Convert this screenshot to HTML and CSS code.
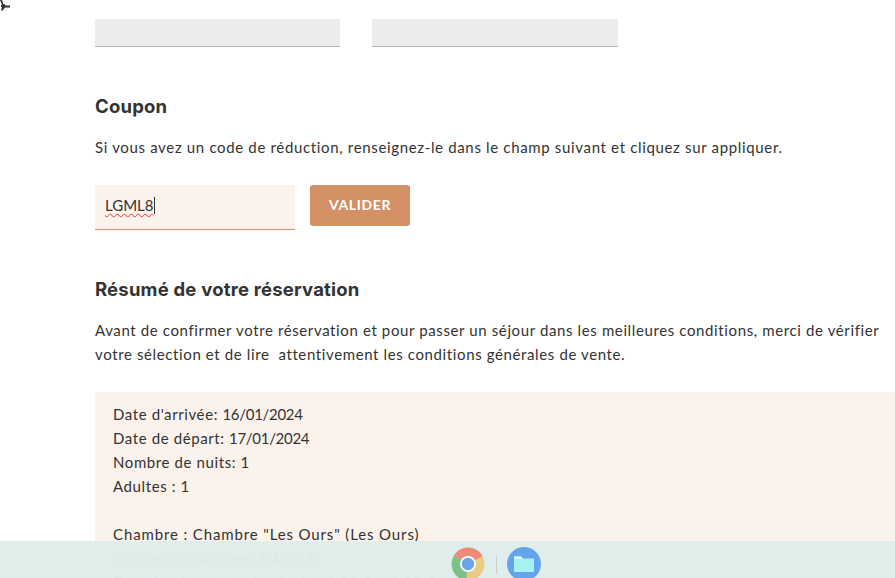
FILE: index.html
```html
<!DOCTYPE html>
<html lang="fr">
<head>
<meta charset="utf-8">
<title>Réservation</title>
<link rel="stylesheet" href="styles.css">
</head>
<body>
<svg class="cursor" width="12" height="12" viewBox="0 0 12 12"><path d="M0 0h2l1 3v1h1.500l1 1.500h4.500v2h-4.500l-1.500 1-1 2h-2l1-3.500h-1v-2h1z" fill="#333"/></svg>
<main class="page">
  <div class="fields">
    <div class="field"></div>
    <div class="field"></div>
  </div>
  <h2 class="coupon-title">Coupon</h2>
  <p class="text coupon-text">Si vous avez un code de réduction, renseignez-le dans le champ suivant et cliquez sur appliquer.</p>
  <div class="coupon-row">
    <div class="coupon-input"><span class="typed">LGML8</span></div>
    <button class="validate">VALIDER</button>
  </div>
  <h2 class="summary-title">Résumé de votre réservation</h2>
  <p class="text summary-text">Avant de confirmer votre réservation et pour passer un séjour dans les meilleures conditions, merci de vérifier votre sélection et de lire&nbsp; attentivement les conditions générales de vente.</p>
  <div class="summary">
    <div>Date d'arrivée: <span class="num">16/01/2024</span></div>
    <div>Date de départ: <span class="num">17/01/2024</span></div>
    <div>Nombre de nuits: 1</div>
    <div>Adultes : 1</div>
    <div class="gap">&nbsp;</div>
    <div class="room">Chambre : Chambre "Les Ours" (Les Ours)</div>
    <div>Prix de la chambres: 84,00 €</div>
    <div>Taxe de séjour (1 x 1 x 1,40) : 2,00 € + 0,00 €</div>
  </div>
</main>
<footer class="shelf">
  <svg class="app" width="34" height="34" viewBox="0 0 34 34">
    <circle cx="17" cy="17" r="16.500" fill="#e9cb84"/>
    <path d="M17 17L3 8.500A16.500 16.500 0 0 1 31.500 9z" fill="#ee8b78"/>
    <path d="M17 17L3 8.500A16.500 16.500 0 0 0 15 33.400z" fill="#7cc08c"/>
    <circle cx="17" cy="17" r="8" fill="#fff"/>
    <circle cx="17" cy="17" r="6.200" fill="#6ca4ec"/>
  </svg>
  <span class="divider"></span>
  <svg class="app" width="34" height="34" viewBox="0 0 34 34">
    <circle cx="17" cy="17" r="17" fill="#64a4ec"/>
    <path d="M7 9.500h7l2 2h11v13.500H7z" fill="#a6f2f2"/>
    <path d="M7 9.500h7l2 2h-9z" fill="#e8fafa"/>
  </svg>
</footer>
</body>
</html>
```
FILE: styles.css
```css
html, body {
  margin: 0;
  height: 578px;
  overflow: hidden;
  background: #fff;
}
body {
  font-family: "Lato", "Liberation Sans", sans-serif;
  color: #333;
}
.cursor {
  position: absolute;
  left: 0;
  top: 0;
}
.page {
  padding: 19px 0 0 95px;
}
.fields {
  display: flex;
  gap: 32px;
}
.field {
  width: 245px;
  height: 27px;
  background: #ececec;
  border-bottom: 1px solid #b5b5b5;
}
.field + .field {
  width: 246px;
}
h2 {
  margin: 0;
  font-family: "Inter", sans-serif;
  font-weight: 700;
  font-size: 18.500px;
  line-height: 24px;
  letter-spacing: 0.200px;
  color: #333;
}
.coupon-title {
  margin-top: 47px;
}
.text {
  margin: 0;
  font-size: 15px;
  line-height: 24px;
  letter-spacing: 0.660px;
  color: #333;
}
.coupon-text {
  margin-top: 17px;
}
.coupon-row {
  display: flex;
  gap: 15px;
  margin-top: 26px;
}
.coupon-input {
  box-sizing: border-box;
  width: 200px;
  height: 45px;
  padding: 0 0 3px 10px;
  background: #fcf2ec;
  border-bottom: 1px solid #d39065;
  display: flex;
  align-items: center;
  font-size: 15px;
}
.typed {
  text-decoration: underline wavy #e8342a 1px;
  text-underline-offset: 2px;
  border-right: 1px solid #333;
  line-height: 17px;
}
.validate {
  width: 100px;
  height: 41px;
  padding: 0 0 3px;
  border: 0;
  border-radius: 3px;
  background: #d39065;
  color: #fff;
  font-family: "Lato", sans-serif;
  font-weight: 700;
  font-size: 14px;
  letter-spacing: 0.600px;
}
.summary-title {
  margin-top: 47px;
}
.summary-text {
  margin-top: 17px;
  letter-spacing: 0.620px;
}
.summary {
  margin-top: 26px;
  padding: 10px 18px;
  background: #fcf2ec;
  font-size: 15px;
  line-height: 24px;
  letter-spacing: 0.600px;
}
.num {
  letter-spacing: -0.300px;
}
.room {
  letter-spacing: 0.870px;
}
.shelf {
  box-sizing: border-box;
  position: fixed;
  left: 0;
  right: 0;
  bottom: 0;
  height: 37px;
  display: flex;
  justify-content: center;
  gap: 10.500px;
  padding-top: 5px;
  padding-left: 97px;
  background: rgba(222, 238, 234, 0.98);
  border-top: 1px solid #e4ece9;
  align-items: flex-start;
}
.app {
  flex: none;
}
.divider {
  width: 1px;
  height: 18px;
  margin-top: 9px;
  background: #c5d2ce;
}
```
